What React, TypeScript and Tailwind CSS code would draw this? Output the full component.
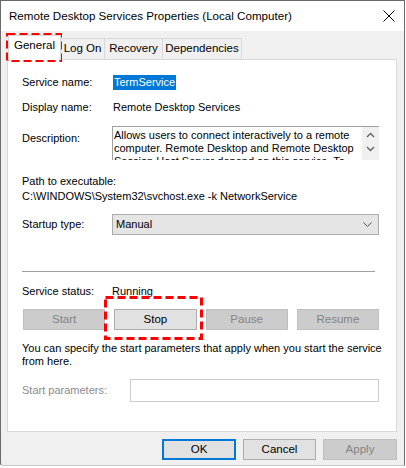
import React from 'react';

const FONT = { fontFamily: '"Liberation Sans", Arial, sans-serif' };

const TABS = [
  { label: 'General', w: 'w-[53px]' },
  { label: 'Log On', w: 'w-[44px]' },
  { label: 'Recovery', w: 'w-[58px]' },
  { label: 'Dependencies', w: 'w-[79px]' },
];

// red dashed callout drawn over a control
function Callout({ className }: { className: string }) {
  return (
    <svg className={`absolute pointer-events-none ${className}`} width="100%" height="100%">
      <rect x="1.5" y="1.5" width="calc(100% - 3px)" height="calc(100% - 3px)" fill="none" stroke="#ff0000" strokeWidth="3" strokeDasharray="8 4" />
    </svg>
  );
}

function DialogButton({ label, state }: { label: string; state: 'normal' | 'disabled' | 'default' }) {
  const cls =
    state === 'disabled'
      ? 'bg-[#cccccc] border border-[#bfbfbf] text-[#838383]'
      : state === 'default'
        ? 'bg-[#e1e1e1] border-2 border-[#0078d7] text-black'
        : 'bg-[#e1e1e1] border border-[#adadad] text-black';
  return <div className={`flex items-center justify-center h-[21px] text-[11.5px] ${cls}`}>{label}</div>;
}

export default function App() {
  return (
    <div className="w-[406px] h-[468px] bg-white relative overflow-hidden text-[11px] text-black" style={FONT}>
      <div className="w-[405px] h-[466px] border border-[#6b6b6b] border-b-[#c8c8c8] rounded-bl-[3px] flex flex-col bg-[#f0f0f0]">
        {/* title bar */}
        <div className="h-[30px] bg-white flex items-center justify-between pl-[8px] pr-[9px] shrink-0">
          <span className="text-[11.6px]">Remote Desktop Services Properties (Local Computer)</span>
          <svg width="12" height="12" viewBox="0 0 12 12">
            <path d="M0.5 0.5 L11.5 11.5 M11.5 0.5 L0.5 11.5" stroke="#000" strokeWidth="1" />
          </svg>
        </div>

        <div className="flex-1 px-[6px] pt-[4px] relative">
          {/* tabs */}
          <div className="flex items-end h-[24px] pl-[1px] text-[11.5px]">
            {TABS.map((t, i) =>
              i === 0 ? (
                <div key={t.label} className={`${t.w} h-[25px] -mb-px relative z-10 bg-white border border-[#d9d9d9] border-b-0 pb-[4px] flex items-center justify-center`}>
                  {t.label}
                </div>
              ) : (
                <div key={t.label} className={`${t.w} h-[21px] bg-[#f0f0f0] border border-[#d9d9d9] border-l-0 border-b-0 flex items-center justify-center`}>
                  {t.label}
                </div>
              )
            )}
          </div>

          {/* tab panel */}
          <div className="w-[390px] h-[373px] bg-white border border-[#d9d9d9] pl-[14px] pr-[17px] relative">
            <div className="flex items-center h-[15px] mt-[15px]">
              <span className="w-[91px]">Service name:</span>
              <span className="bg-[#0078d7] text-white px-px h-[15px] leading-[15px]">TermService</span>
            </div>
            <div className="flex items-center h-[15px] mt-[10px]">
              <span className="w-[91px]">Display name:</span>
              <span>Remote Desktop Services</span>
            </div>
            <div className="flex mt-[11px]">
              <span className="w-[90px] mt-[5px] leading-[15px]">Description:</span>
              <div className="flex-1 h-[34px] border-t border-l border-[#a0a0a0] flex overflow-hidden">
                <div className="flex-1 pl-[1px] pt-[2px] leading-[13px]">
                  Allows users to connect interactively to a remote computer. Remote Desktop and Remote Desktop Session Host Server depend on this service. To
                </div>
                <div className="w-[17px] bg-[#f0f0f0] flex flex-col items-center pt-[5px] gap-[8px]">
                  <svg width="9" height="6" viewBox="0 0 9 6">
                    <path d="M1 5 L4.5 1.5 L8 5" stroke="#606060" strokeWidth="1.3" fill="none" />
                  </svg>
                  <svg width="9" height="6" viewBox="0 0 9 6">
                    <path d="M1 1 L4.5 4.5 L8 1" stroke="#606060" strokeWidth="1.3" fill="none" />
                  </svg>
                </div>
              </div>
            </div>
            <div className="mt-[14px] leading-[15px]">Path to executable:</div>
            <div className="leading-[15px]">C:\WINDOWS\System32\svchost.exe -k NetworkService</div>
            <div className="flex items-center mt-[10px]">
              <span className="w-[90px]">Startup type:</span>
              <div className="flex-1 h-[21px] bg-[#e5e5e5] border border-[#adadad] flex items-center justify-between pl-[3px] pr-[6px]">
                <span>Manual</span>
                <svg width="9" height="5" viewBox="0 0 9 5">
                  <path d="M0.5 0.5 L4.5 4.5 L8.5 0.5" stroke="#505050" strokeWidth="1" fill="none" />
                </svg>
              </div>
            </div>
            <div className="mt-[36px] mr-[4px] h-px bg-[#a0a0a0]" />
            <div className="flex items-center h-[15px] mt-[12px]">
              <span className="w-[90px]">Service status:</span>
              <span>Running</span>
            </div>
            <div className="grid grid-cols-4 gap-[9px] mt-[10px] ml-px">
              <DialogButton label="Start" state="disabled" />
              <DialogButton label="Stop" state="normal" />
              <DialogButton label="Pause" state="disabled" />
              <DialogButton label="Resume" state="disabled" />
            </div>
            <p className="mt-[12px] leading-[13px] -mr-[8px]">
              You can specify the start parameters that apply when you start the service from here.
            </p>
            <div className="flex items-center mt-[11px]">
              <span className="w-[108px] text-[#8c8c8c]">Start parameters:</span>
              <div className="flex-1 h-[23px] bg-white border border-[#cccccc]" />
            </div>

            <Callout className="left-[96px] top-[236px] !w-[99px] !h-[44px]" />
          </div>

          {/* dialog buttons */}
          <div className="flex justify-end gap-[7px] mt-[7px] pr-px">
            <div className="w-[74px]"><DialogButton label="OK" state="default" /></div>
            <div className="w-[73px]"><DialogButton label="Cancel" state="normal" /></div>
            <div className="w-[74px]"><DialogButton label="Apply" state="disabled" /></div>
          </div>

          <Callout className="left-[5px] top-[2px] !w-[56px] !h-[29px]" />
        </div>
      </div>
    </div>
  );
}
